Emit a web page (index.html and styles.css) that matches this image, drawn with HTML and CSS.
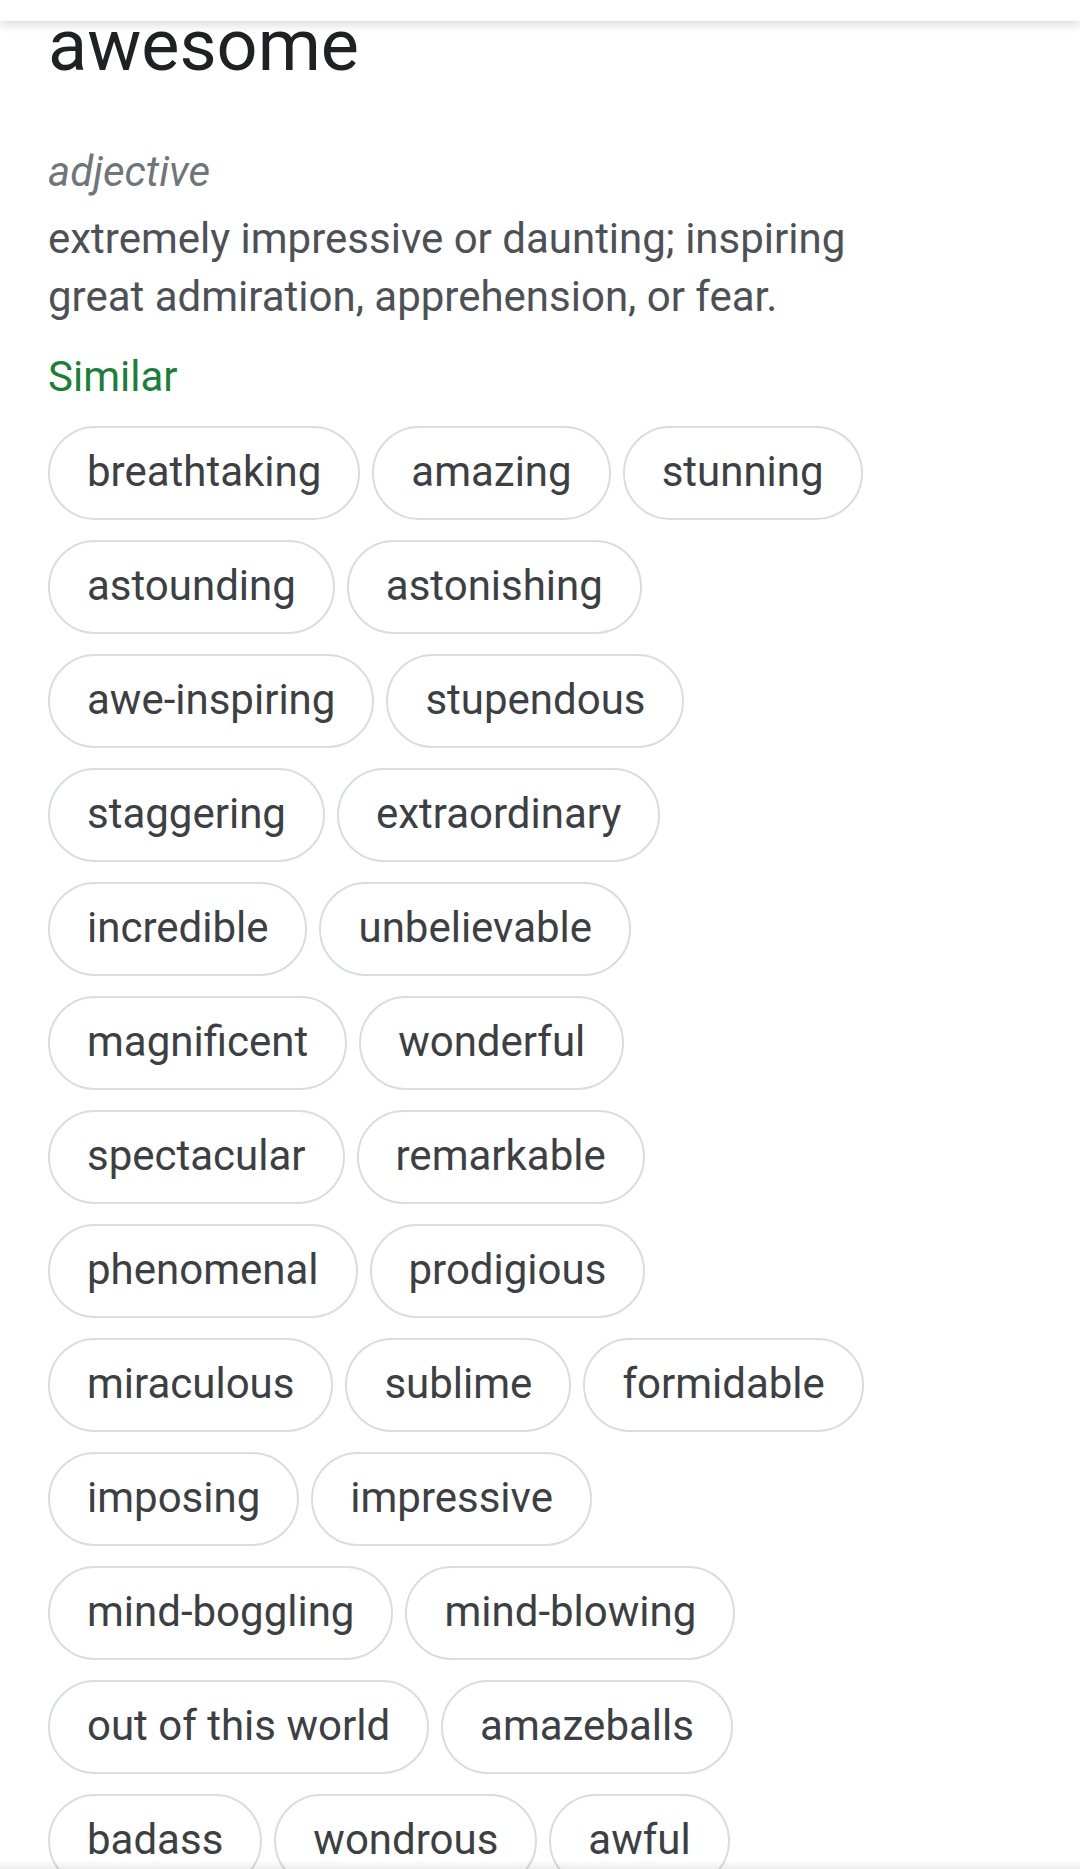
FILE: index.html
```html
<!DOCTYPE html>
<html lang="en">
<head>
<meta charset="utf-8">
<title>awesome</title>
<link rel="stylesheet" href="styles.css">
</head>
<body>
<div class="topbar"></div>
<main class="content">
  <h1 class="word">awesome</h1>
  <div class="pos">adjective</div>
  <p class="definition">extremely impressive or daunting; inspiring great admiration, apprehension, or fear.</p>
  <div class="similar-label">Similar</div>
  <div class="chips">
    <span class="chip">breathtaking</span>
    <span class="chip">amazing</span>
    <span class="chip">stunning</span>
    <span class="chip">astounding</span>
    <span class="chip">astonishing</span>
    <span class="chip">awe-inspiring</span>
    <span class="chip">stupendous</span>
    <span class="chip">staggering</span>
    <span class="chip">extraordinary</span>
    <span class="chip">incredible</span>
    <span class="chip">unbelievable</span>
    <span class="chip">magnificent</span>
    <span class="chip">wonderful</span>
    <span class="chip">spectacular</span>
    <span class="chip">remarkable</span>
    <span class="chip">phenomenal</span>
    <span class="chip">prodigious</span>
    <span class="chip">miraculous</span>
    <span class="chip">sublime</span>
    <span class="chip">formidable</span>
    <span class="chip">imposing</span>
    <span class="chip">impressive</span>
    <span class="chip">mind-boggling</span>
    <span class="chip">mind-blowing</span>
    <span class="chip">out of this world</span>
    <span class="chip">amazeballs</span>
    <span class="chip">badass</span>
    <span class="chip">wondrous</span>
    <span class="chip">awful</span>
  </div>
</main>
<div class="bottom-shade"></div>
</body>
</html>
```
FILE: styles.css
```css
html, body {
  margin: 0;
  padding: 0;
  height: 1869px;
  overflow: hidden;
  background: #ffffff;
}

body {
  font-family: Roboto, "Liberation Sans", Arial, sans-serif;
  color: #202124;
}

.topbar {
  position: fixed;
  top: 0;
  left: 0;
  right: 0;
  height: 21px;
  background: #ffffff;
  box-shadow: 0 3px 12px rgba(0, 0, 0, 0.16);
  z-index: 2;
}

.bottom-shade {
  position: fixed;
  left: 0;
  right: 0;
  bottom: 0;
  height: 9px;
  background: linear-gradient(to bottom, rgba(0, 0, 0, 0), rgba(0, 0, 0, 0.07));
  z-index: 2;
}

.content {
  width: 850px;
  padding: 4px 0 0 48px;
}

.word {
  margin: 0;
  font-size: 72px;
  font-weight: 400;
  line-height: 84px;
  color: #202124;
}

.pos {
  margin-top: 55px;
  font-size: 42px;
  font-style: italic;
  line-height: 58px;
  color: #70757a;
}

.definition {
  margin: 9px 0 0 0;
  font-size: 42px;
  line-height: 58px;
  color: #4d5156;
}

.similar-label {
  margin-top: 22px;
  font-size: 42px;
  line-height: 58px;
  color: #188038;
}

.chips {
  margin-top: 20px;
  display: flex;
  flex-wrap: wrap;
  column-gap: 12px;
  row-gap: 20px;
}

.chip {
  box-sizing: border-box;
  height: 94px;
  padding: 0 37px;
  border: 2px solid #dadce0;
  border-radius: 47px;
  font-size: 42px;
  line-height: 88px;
  color: #3c4043;
  white-space: nowrap;
}
```
